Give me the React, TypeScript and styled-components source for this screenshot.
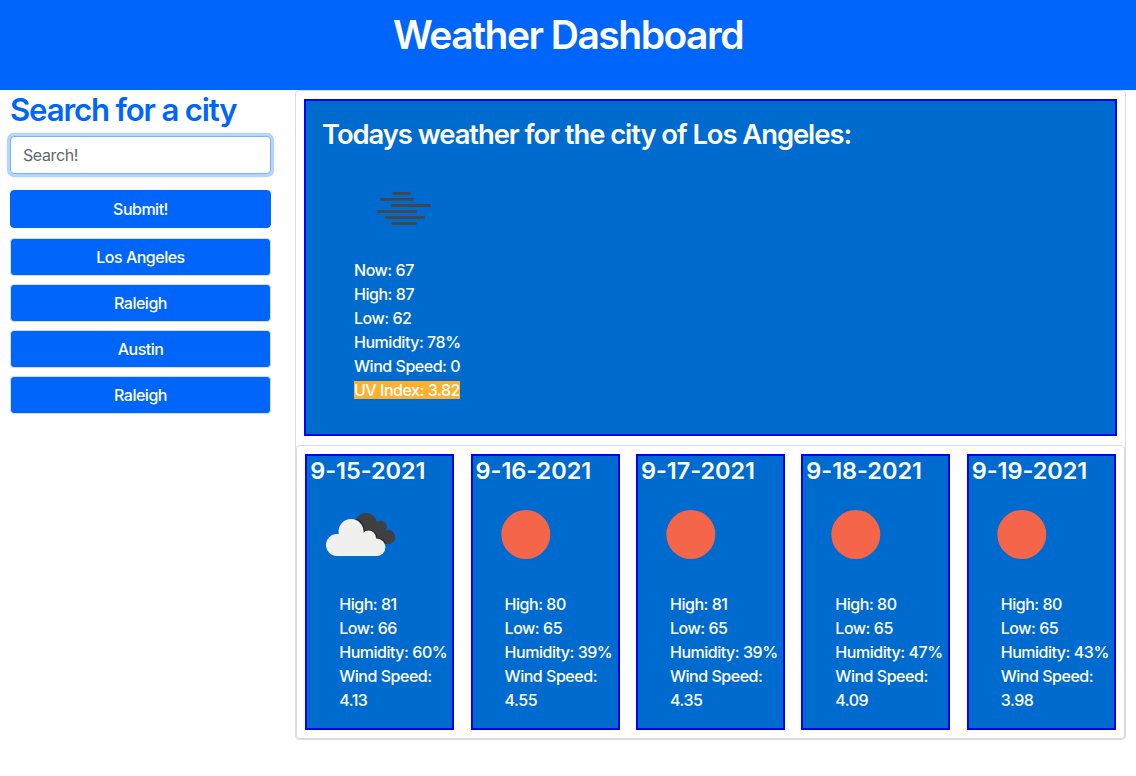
import React from "react";
import styled, { createGlobalStyle } from "styled-components";

const GlobalStyle = createGlobalStyle`
  *, *::before, *::after { box-sizing: border-box; }
  body {
    margin: 0;
    background: #fff;
    font: 500 16px/24px Inter, "Liberation Sans", sans-serif;
    color: #fff;
  }
  h1, h2, h3, h4, ul { margin: 0; padding: 0; font-weight: 600; }
`;

const primary = "#0065fb";
const panelBlue = "#006bcf";
const frame = "#dadadb";

const Header = styled.header`
  height: 90px;
  padding-top: 11px;
  background: ${primary};
  text-align: center;
`;

const Title = styled.h1`
  font-size: 39px;
  line-height: 48px;
  letter-spacing: -1.5px;
`;

const Layout = styled.div`
  display: grid;
  grid-template-columns: 261px 831px;
  column-gap: 24px;
  align-items: start;
  padding-left: 10px;
`;

const Sidebar = styled.aside`
  display: flex;
  flex-direction: column;
`;

const SidebarTitle = styled.h2`
  font-size: 31.2px;
  line-height: 38px;
  letter-spacing: -1.18px;
  color: ${primary};
  white-space: nowrap;
  padding-top: 1px;
  margin-bottom: 7px;
`;

const SearchInput = styled.input`
  height: 38px;
  padding: 6px 12px;
  border: 1px solid #78b3fb;
  border-radius: 4px;
  outline: none;
  box-shadow: 0 0 0 3.2px #b5d5fd;
  font: inherit;
  font-weight: 400;
  letter-spacing: -0.4px;
  color: #495057;
  &::placeholder { color: #60686f; opacity: 1; }
`;

const Button = styled.button<{ $outlined?: boolean }>`
  height: 38px;
  padding: 0 12px;
  border: 1px solid ${(p) => (p.$outlined ? "#d0dcec" : primary)};
  border-radius: 4px;
  background: ${primary};
  color: #fff;
  font: inherit;
  letter-spacing: -0.5px;
`;

const SubmitButton = styled(Button)`
  margin: 16px 0 10px;
`;

const CityList = styled.div`
  display: flex;
  flex-direction: column;
  gap: 8px;
`;

const Results = styled.main`
  border: 1px solid ${frame};
  border-radius: 4px;
`;

const Today = styled.section`
  height: 337px;
  margin: 8px 8px 9px;
  padding: 16px;
  border: 2px solid #0000fa;
  background: ${panelBlue};
`;

const TodayTitle = styled.h3`
  font-size: 27.4px;
  line-height: 34px;
  letter-spacing: -1.05px;
  margin-bottom: 7px;
`;

const TodayBody = styled.div`
  padding-left: 32px;
`;

const WeatherIcon = styled.svg`
  display: block;
  width: 100px;
  height: 100px;
`;

const Stats = styled.ul<{ $inset?: boolean }>`
  list-style: none;
  font-weight: 500;
  letter-spacing: -0.47px;
  padding: ${(p) => (p.$inset ? "7px 0 0 32px" : "0")};
`;

const UvIndex = styled.span`
  display: inline-block;
  height: 18px;
  line-height: 18px;
  background: #ffb02e;
`;

const Forecast = styled.section`
  display: flex;
  justify-content: space-between;
  padding: 8px 8.3px 8px 8.2px;
  border: 1px solid ${frame};
  border-radius: 4px;
`;

const DayCard = styled.article`
  width: 149px;
  height: 276px;
  border: 2px solid #0000fa;
  background: ${panelBlue};
`;

const DayTitle = styled.h4`
  font-size: 23.5px;
  line-height: 29px;
  letter-spacing: -0.05px;
  padding-left: 3px;
`;

const DayIcon = styled.div`
  padding-left: 3px;
`;

type Sky = "fog" | "clouds" | "clear";

function Icon({ sky }: { sky: Sky }) {
  if (sky === "fog") {
    return (
      <WeatherIcon viewBox="0 0 100 100" aria-label="fog">
        <path
          d="M39.7 35.3H55.3M27.5 41.4H58.5M38.5 47.5H75.7M24.5 53.6H61.7M32.5 59.7H69.7M38.5 65.7H61.7"
          fill="none"
          stroke="#464649"
          strokeWidth="2.8"
          strokeLinecap="round"
        />
      </WeatherIcon>
    );
  }
  if (sky === "clouds") {
    return (
      <WeatherIcon viewBox="0 0 100 100" aria-label="broken clouds">
        <g fill="#404042">
          <circle cx="56" cy="39" r="11" />
          <circle cx="70.5" cy="42" r="6.3" />
          <circle cx="78" cy="52" r="7.2" />
          <path d="M50 40H73L76 59H62Z" />
        </g>
        <path
          d="M46 34.2A13.2 13.2 0 0 1 54.2 46.4A8.4 8.4 0 0 1 66.6 53.2A9.2 9.2 0 0 1 75.2 59"
          fill="none"
          stroke="#292a2c"
          strokeWidth="1.4"
        />
        <g fill="#f0f0ef">
          <circle cx="27" cy="60" r="11" />
          <circle cx="41" cy="46.5" r="12.5" />
          <circle cx="58.5" cy="53.2" r="7.6" />
          <circle cx="66.7" cy="62.3" r="8.7" />
          <path d="M27 49H57L66.7 54V71H27Z" />
        </g>
      </WeatherIcon>
    );
  }
  return (
    <WeatherIcon viewBox="0 0 100 100" aria-label="clear sky">
      <circle cx="49.8" cy="49.5" r="24.5" fill="#f4654a" />
    </WeatherIcon>
  );
}

const cities = ["Los Angeles", "Raleigh", "Austin", "Raleigh"];

const days: { date: string; sky: Sky; high: number; low: number; humidity: number; wind: string }[] = [
  { date: "9-15-2021", sky: "clouds", high: 81, low: 66, humidity: 60, wind: "4.13" },
  { date: "9-16-2021", sky: "clear", high: 80, low: 65, humidity: 39, wind: "4.55" },
  { date: "9-17-2021", sky: "clear", high: 81, low: 65, humidity: 39, wind: "4.35" },
  { date: "9-18-2021", sky: "clear", high: 80, low: 65, humidity: 47, wind: "4.09" },
  { date: "9-19-2021", sky: "clear", high: 80, low: 65, humidity: 43, wind: "3.98" },
];

export default function App() {
  return (
    <>
      <GlobalStyle />
      <Header>
        <Title>Weather Dashboard</Title>
      </Header>
      <Layout>
        <Sidebar>
          <SidebarTitle>Search for a city</SidebarTitle>
          <SearchInput placeholder="Search!" />
          <SubmitButton>Submit!</SubmitButton>
          <CityList>
            {cities.map((city, i) => (
              <Button key={i} $outlined>{city}</Button>
            ))}
          </CityList>
        </Sidebar>
        <Results>
          <Today>
            <TodayTitle>Todays weather for the city of Los Angeles:</TodayTitle>
            <TodayBody>
              <Icon sky="fog" />
              <Stats>
                <li>Now: 67</li>
                <li>High: 87</li>
                <li>Low: 62</li>
                <li>Humidity: 78%</li>
                <li>Wind Speed: 0</li>
                <li><UvIndex>UV Index: 3.82</UvIndex></li>
              </Stats>
            </TodayBody>
          </Today>
          <Forecast>
            {days.map((day) => (
              <DayCard key={day.date}>
                <DayTitle>{day.date}</DayTitle>
                <DayIcon>
                  <Icon sky={day.sky} />
                </DayIcon>
                <Stats $inset>
                  <li>High: {day.high}</li>
                  <li>Low: {day.low}</li>
                  <li>Humidity: {day.humidity}%</li>
                  <li>Wind Speed: {day.wind}</li>
                </Stats>
              </DayCard>
            ))}
          </Forecast>
        </Results>
      </Layout>
    </>
  );
}
